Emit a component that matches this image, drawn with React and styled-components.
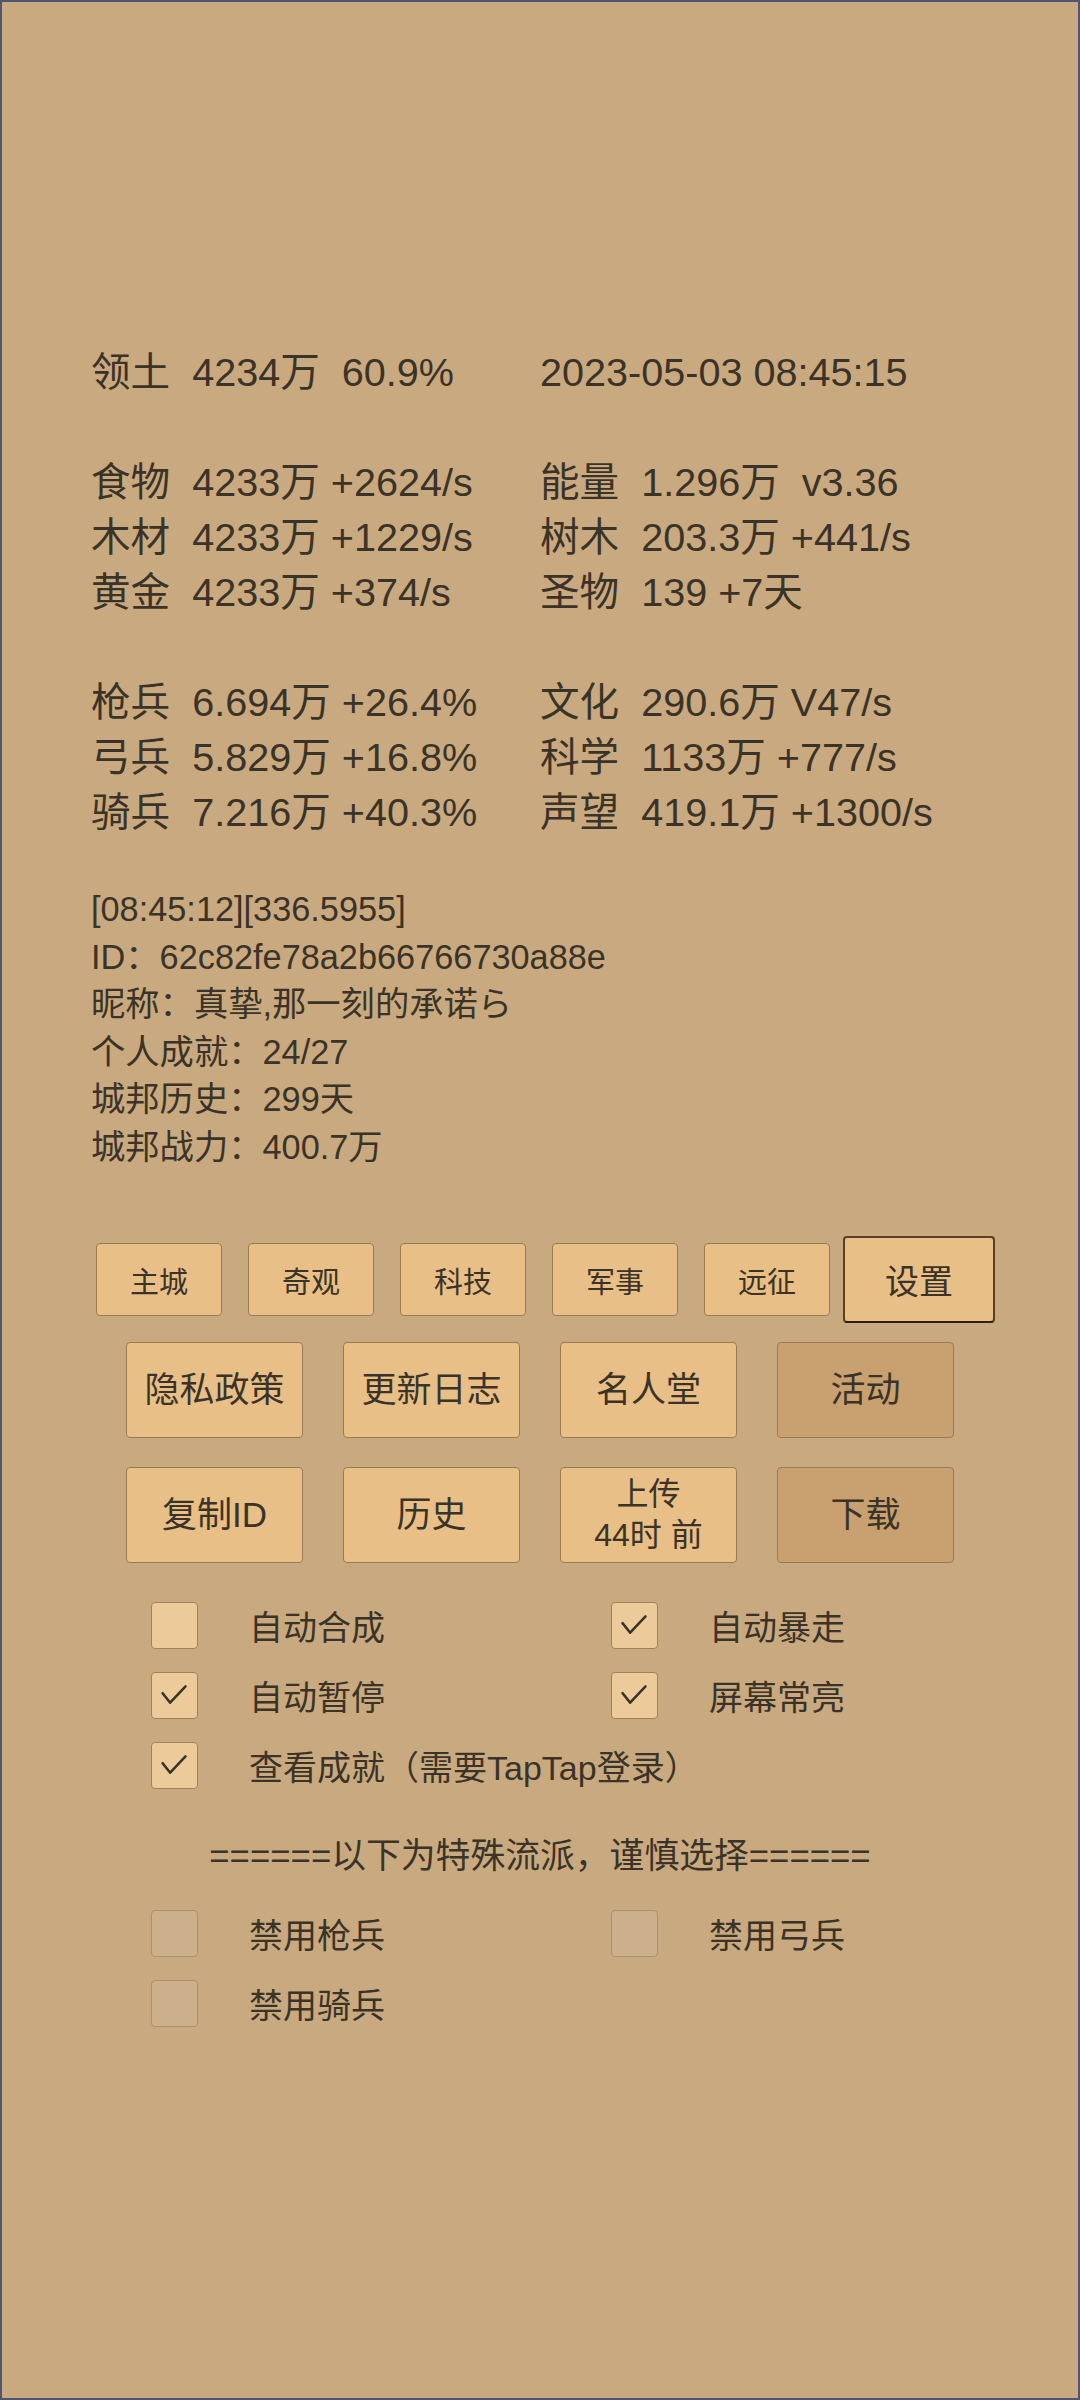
import React from 'react';
import styled, { createGlobalStyle } from 'styled-components';

const Global = createGlobalStyle`
  html, body {
    margin: 0;
    padding: 0;
    background: #c9aa80;
  }
  * {
    box-sizing: border-box;
  }
`

const Screen = styled.div`
  width: 1080px;
  height: 2400px;
  background: #c9aa80;
  border: 2px solid #4f5470;
  color: #3b3327;
  font-family: "Liberation Sans", "Noto Sans CJK SC", sans-serif;
  display: flex;
  flex-direction: column;
`

const Stats = styled.div`
  margin-top: 343px;
  padding-left: 89px;
  font-size: 39.6px;
  line-height: 55px;
`

const StatRow = styled.div`
  display: grid;
  grid-template-columns: 449px 1fr;
  height: 55px;
  white-space: pre;
`

const Info = styled.div`
  margin-top: 46px;
  padding-left: 89px;
  font-size: 34.3px;
  line-height: 47.5px;
`

const TabBar = styled.div`
  margin-top: 65px;
  padding-left: 94px;
  height: 87px;
  display: flex;
  align-items: center;
  gap: 26px;
`

const Tab = styled.div`
  width: ${p => (p.$active ? '152px' : '126px')};
  height: ${p => (p.$active ? '87px' : '73px')};
  margin: ${p => (p.$active ? '0 -13px' : '0')};
  background: #e8bf86;
  border: ${p => (p.$active ? '2px solid #5a3f22' : '1.5px solid #9c7a50')};
  border-bottom-color: ${p => (p.$active ? '#2e1f10' : '#9c7a50')};
  border-radius: 4px;
  display: flex;
  align-items: center;
  justify-content: center;
  font-size: ${p => (p.$active ? '34px' : '29px')};
`

const ButtonGrid = styled.div`
  margin-top: 19px;
  display: grid;
  grid-template-columns: repeat(4, 177px);
  grid-auto-rows: 96px;
  column-gap: 40px;
  row-gap: 29px;
  justify-content: center;
`

const Button = styled.div`
  background: ${p => (p.$dark ? '#c9a070' : '#e8bf86')};
  border: 1.5px solid #9c7a50;
  border-radius: 4px;
  display: flex;
  flex-direction: column;
  align-items: center;
  justify-content: center;
  font-size: ${p => (p.$small ? '32px' : '35px')};
  line-height: ${p => (p.$small ? '41px' : '1.2')};
  white-space: pre;
  text-align: center;
`

const Options = styled.div`
  margin-top: ${p => p.$top}px;
  padding-left: 149px;
  display: grid;
  grid-template-columns: 460px 1fr;
  grid-auto-rows: 70px;
  font-size: 34px;
`

const Option = styled.label`
  display: flex;
  align-items: center;
  gap: 51px;
  white-space: nowrap;
  grid-column: ${p => (p.$wide ? '1 / -1' : 'auto')};
`

const Box = styled.span`
  width: 47px;
  height: 47px;
  flex: none;
  border-radius: 4px;
  background: ${p => (p.$disabled ? '#ccb08b' : '#ecca9a')};
  border: 1.5px solid ${p => (p.$disabled ? '#ae9068' : '#a0825a')};
  display: flex;
  align-items: center;
  justify-content: center;
`

const Divider = styled.div`
  margin-top: 18px;
  height: 70px;
  display: flex;
  align-items: center;
  justify-content: center;
  font-size: 34.8px;
  white-space: nowrap;
`

const Check = () => (
  <svg width="47" height="47" viewBox="0 0 47 47">
    <polyline points="11,21 19,31 35,14" fill="none" stroke="#3a3328" strokeWidth="2.6" strokeLinecap="round" strokeLinejoin="round" />
  </svg>
)

const CheckOption = ({ label, checked, disabled, wide }) => (
  <Option $wide={wide}>
    <Box $disabled={disabled}>{checked && <Check />}</Box>
    <span>{label}</span>
  </Option>
)

const statRows = [
  ['领土  4234万  60.9%', '2023-05-03 08:45:15'],
  null,
  ['食物  4233万 +2624/s', '能量  1.296万  v3.36'],
  ['木材  4233万 +1229/s', '树木  203.3万 +441/s'],
  ['黄金  4233万 +374/s', '圣物  139 +7天'],
  null,
  ['枪兵  6.694万 +26.4%', '文化  290.6万 V47/s'],
  ['弓兵  5.829万 +16.8%', '科学  1133万 +777/s'],
  ['骑兵  7.216万 +40.3%', '声望  419.1万 +1300/s'],
]

const info = [
  '[08:45:12][336.5955]',
  'ID：62c82fe78a2b66766730a88e',
  '昵称：真挚,那一刻的承诺ら',
  '个人成就：24/27',
  '城邦历史：299天',
  '城邦战力：400.7万',
]

const tabs = ['主城', '奇观', '科技', '军事', '远征', '设置']

const buttons = [
  { text: '隐私政策' },
  { text: '更新日志' },
  { text: '名人堂' },
  { text: '活动', dark: true },
  { text: '复制ID' },
  { text: '历史' },
  { text: '上传\n44时 前', small: true },
  { text: '下载', dark: true },
]

const App = () => {
  return (
    <Screen>
      <Global />
      <Stats>
        {statRows.map((row, i) =>
          row ? (
            <StatRow key={i}>
              <div>{row[0]}</div>
              <div>{row[1]}</div>
            </StatRow>
          ) : (
            <StatRow key={i} />
          )
        )}
      </Stats>
      <Info>
        {info.map(line => <div key={line}>{line}</div>)}
      </Info>
      <TabBar>
        {tabs.map(t => <Tab key={t} $active={t === '设置'}>{t}</Tab>)}
      </TabBar>
      <ButtonGrid>
        {buttons.map(b => (
          <Button key={b.text} $dark={b.dark} $small={b.small}>{b.text}</Button>
        ))}
      </ButtonGrid>
      <Options $top={27}>
        <CheckOption label="自动合成" />
        <CheckOption label="自动暴走" checked />
        <CheckOption label="自动暂停" checked />
        <CheckOption label="屏幕常亮" checked />
        <CheckOption label="查看成就（需要TapTap登录）" checked wide />
      </Options>
      <Divider>======以下为特殊流派，谨慎选择======</Divider>
      <Options $top={10}>
        <CheckOption label="禁用枪兵" disabled />
        <CheckOption label="禁用弓兵" disabled />
        <CheckOption label="禁用骑兵" disabled />
      </Options>
    </Screen>
  );
}

export default App;
